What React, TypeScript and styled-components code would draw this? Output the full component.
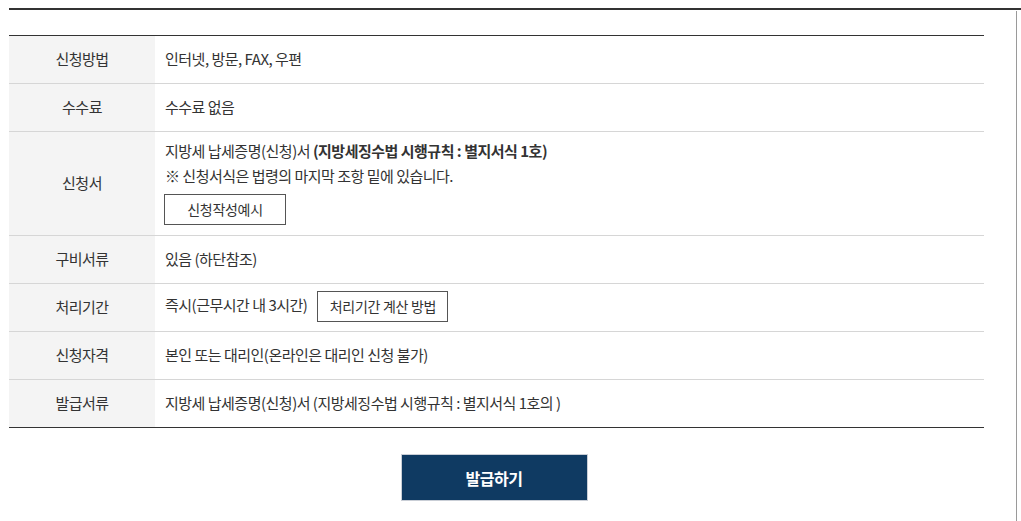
import React from 'react';
import styled, { createGlobalStyle } from 'styled-components';

const GlobalStyle = createGlobalStyle`
  html, body {
    margin: 0;
    padding: 0;
    background: #fff;
  }
  body {
    font-family: "Noto Sans CJK KR", "Noto Sans", sans-serif;
    color: #333;
  }
`;

interface Row {
  label: string;
  content: React.ReactNode;
  tall?: boolean;
}

const buildRows = (): Row[] => [
  { label: '신청방법', content: '인터넷, 방문, FAX, 우편' },
  { label: '수수료', content: '수수료 없음' },
  {
    label: '신청서',
    tall: true,
    content: (
      <>
        <Line>
          지방세 납세증명(신청)서 <Strong>(지방세징수법 시행규칙 : 별지서식 1호)</Strong>
        </Line>
        <Line>※ 신청서식은 법령의 마지막 조항 밑에 있습니다.</Line>
        <OutlineButton width={122} stacked>신청작성예시</OutlineButton>
      </>
    ),
  },
  { label: '구비서류', content: '있음 (하단참조)' },
  {
    label: '처리기간',
    content: (
      <>
        즉시(근무시간 내 3시간)
        <OutlineButton width={131}>처리기간 계산 방법</OutlineButton>
      </>
    ),
  },
  { label: '신청자격', content: '본인 또는 대리인(온라인은 대리인 신청 불가)' },
  { label: '발급서류', content: '지방세 납세증명(신청)서 (지방세징수법 시행규칙 : 별지서식 1호의 )' },
];

const App: React.FC = () => {
  const rows: Row[] = buildRows();

  return (
    <>
      <GlobalStyle />
      <Page>
        <Frame>
          <Main>
            <InfoTable>
              <colgroup>
                <col style={{ width: 146 }} />
                <col />
              </colgroup>
              <tbody>
                {rows.map((row: Row) => (
                  <tr key={row.label}>
                    <HeadCell>{row.label}</HeadCell>
                    <BodyCell tall={row.tall}>{row.content}</BodyCell>
                  </tr>
                ))}
              </tbody>
            </InfoTable>
            <Actions>
              <PrimaryButton type="button">발급하기</PrimaryButton>
            </Actions>
          </Main>
          <RightRule />
        </Frame>
      </Page>
    </>
  );
};

export default App;

const Page = styled.div`
  padding: 8px 0 0 9px;
  height: 521px;
  box-sizing: border-box;
`;

const Frame = styled.div`
  display: flex;
  height: 100%;
  border-top: 2px solid #333;
  box-sizing: border-box;
`;

const Main = styled.div`
  flex: 1;
  padding-top: 25px;
`;

const RightRule = styled.div`
  width: 1px;
  margin: 1px 4px 0 0;
  background: #9a9a9a;
`;

const InfoTable = styled.table`
  width: 975px;
  border-collapse: collapse;
  border-top: 1px solid #333;
  border-bottom: 1px solid #333;
  font-size: 15px;
  letter-spacing: -0.5px;
  line-height: 25px;

  tr + tr td,
  tr + tr th {
    border-top: 1px solid #d6d6d6;
  }
`;

const HeadCell = styled.th`
  height: 45px;
  padding: 0 0 2px;
  background: #f4f4f4;
  font-weight: 400;
  text-align: center;
  vertical-align: middle;
`;

interface BodyCellProps {
  tall?: boolean;
}

const BodyCell = styled.td.withConfig({
  shouldForwardProp: (prop: string) => prop !== 'tall',
})<BodyCellProps>`
  height: 45px;
  padding: ${({ tall }: BodyCellProps) => (tall ? '6px 10px 10px' : '0 10px 2px')};
  text-align: left;
  vertical-align: middle;
`;

const Line = styled.div`
  line-height: 25px;
`;

const Strong = styled.strong`
  font-weight: 700;
`;

interface OutlineButtonProps {
  width: number;
  stacked?: boolean;
}

const OutlineButton = styled.button.withConfig({
  shouldForwardProp: (prop: string) => prop !== 'width' && prop !== 'stacked',
})<OutlineButtonProps>`
  display: ${({ stacked }: OutlineButtonProps) => (stacked ? 'block' : 'inline-block')};
  width: ${({ width }: OutlineButtonProps) => width}px;
  height: 31px;
  margin: ${({ stacked }: OutlineButtonProps) => (stacked ? '6px 0 0 -1px' : '0 0 0 10px')};
  padding: 0;
  border: 1px solid #555;
  background: #fff;
  color: #333;
  font-family: "Noto Sans CJK KR", "Noto Sans", sans-serif;
  font-size: 14px;
  letter-spacing: -0.3px;
  line-height: 29px;
  vertical-align: middle;
  cursor: pointer;
`;

const Actions = styled.div`
  width: 975px;
  display: flex;
  justify-content: center;
  padding-top: 26px;
`;

const PrimaryButton = styled.button`
  width: 187px;
  height: 47px;
  margin-right: 5px;
  border: 1px solid #c9ced6;
  background: #0f3a62;
  color: #fff;
  font-family: "Noto Sans CJK KR", "Noto Sans", sans-serif;
  font-size: 16px;
  font-weight: 700;
  letter-spacing: -0.5px;
  cursor: pointer;
`;
